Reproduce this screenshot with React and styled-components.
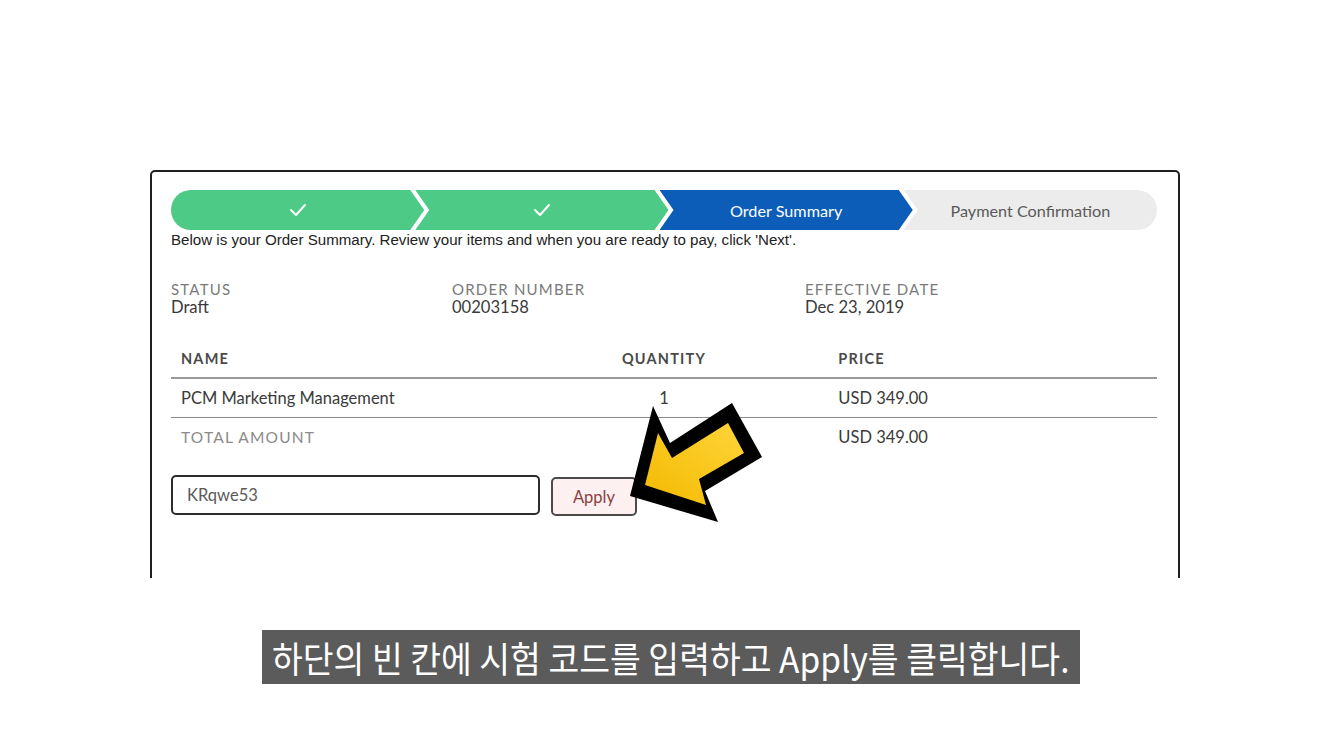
import React from "react";
import styled, { createGlobalStyle } from "styled-components";

const GlobalStyle = createGlobalStyle`
  html, body {
    margin: 0;
    padding: 0;
    background: #ffffff;
  }
  * {
    box-sizing: border-box;
  }
`;

const Page = styled.div`
  width: 1321px;
  height: 741px;
  overflow: hidden;
  background: #ffffff;
  display: flex;
  flex-direction: column;
  padding-top: 170px;
`;

const Viewport = styled.div`
  height: 408px;
  overflow: hidden;
  padding-left: 150px;
`;

const Card = styled.div`
  position: relative;
  width: 1030px;
  height: 520px;
  border: 2px solid #1f1f1f;
  border-radius: 5px;
  background: #ffffff;
  padding: 18px 21px 0 19px;
  font-family: Lato, "Open Sans", sans-serif;
`;

const Steps = styled.div`
  display: flex;
  height: 40px;
`;

const Step = styled.div`
  flex: 1;
  display: flex;
  align-items: center;
  justify-content: center;
  margin-left: ${(p) => (p.$first ? "0" : "-9px")};
  background: ${(p) => p.$bg};
  color: ${(p) => p.$color};
  font-size: 16.2px;
  border-radius: ${(p) =>
    p.$first ? "20px 0 0 20px" : p.$last ? "0 20px 20px 0" : "0"};
  clip-path: ${(p) =>
    p.$first
      ? "polygon(0 0, calc(100% - 14px) 0, 100% 50%, calc(100% - 14px) 100%, 0 100%)"
      : p.$last
      ? "polygon(0 0, 100% 0, 100% 100%, 0 100%, 14px 50%)"
      : "polygon(0 0, calc(100% - 14px) 0, 100% 50%, calc(100% - 14px) 100%, 0 100%, 14px 50%)"};
`;

const Intro = styled.div`
  font-family: "Liberation Sans", Arial, sans-serif;
  font-size: 15.1px;
  color: #222;
  line-height: 17px;
  margin-top: 1px;
`;

const InfoGrid = styled.div`
  display: grid;
  grid-template-columns: 281px 353px 1fr;
  margin-top: 32px;
`;

const InfoLabel = styled.div`
  font-size: 15px;
  letter-spacing: 1.2px;
  color: #7a7a7a;
  text-transform: uppercase;
  line-height: 18px;
`;

const InfoValue = styled.div`
  font-size: 16.6px;
  color: #3a3a3a;
  line-height: 19px;
`;

const Table = styled.div`
  margin-top: 22px;
`;

const Row = styled.div`
  display: grid;
  grid-template-columns: 1fr 1fr 1fr;
  align-items: center;
  height: ${(p) => p.$h || "39px"};
  border-bottom: ${(p) => p.$line || "none"};
`;

const Cell = styled.div`
  padding: 0 10px;
  text-align: ${(p) => p.$align || "left"};
  font-size: ${(p) => (p.$head ? "14.5px" : p.$muted ? "15.5px" : "16.5px")};
  font-weight: ${(p) => (p.$head ? 700 : 400)};
  letter-spacing: ${(p) => (p.$head || p.$muted ? "1.2px" : "0")};
  color: ${(p) => (p.$head ? "#4a4a4a" : p.$muted ? "#8a8a8a" : "#3a3a3a")};
`;

const CouponRow = styled.div`
  display: flex;
  align-items: center;
  gap: 11px;
  margin-top: 18px;
`;

const CodeInput = styled.div`
  width: 369px;
  height: 40px;
  border: 2px solid #2c2c2c;
  border-radius: 5px;
  display: flex;
  align-items: center;
  padding-left: 14px;
  font-size: 16.5px;
  color: #5a5a5a;
`;

const ApplyButton = styled.button`
  width: 86px;
  height: 39px;
  margin-top: 3px;
  border: 2px solid #4a4a4a;
  border-radius: 5px;
  background: #fcf0f0;
  color: #8a3f3f;
  font-family: Lato, "Open Sans", sans-serif;
  font-size: 16.5px;
  cursor: pointer;
`;

const Pointer = styled.svg`
  position: absolute;
  left: 468px;
  top: 223px;
  width: 150px;
  height: 132px;
  overflow: visible;
`;

const CaptionRow = styled.div`
  display: flex;
  padding-left: 262px;
  margin-top: 52px;
`;

const Caption = styled.div`
  width: 818px;
  height: 54px;
  background: #5b5b5b;
  display: flex;
  align-items: center;
  justify-content: center;
  overflow: hidden;
`;

const CaptionText = styled.span`
  display: inline-block;
  white-space: nowrap;
  font-family: "Noto Sans CJK KR", "Noto Sans", sans-serif;
  font-size: 36px;
  line-height: 54px;
  color: #ffffff;
  transform: scaleX(0.93);
`;

const Check = () => (
  <svg width="18" height="14" viewBox="0 0 18 14">
    <polyline
      points="2,7 7,12 16,2"
      fill="none"
      stroke="#ffffff"
      strokeWidth="2"
      strokeLinecap="round"
      strokeLinejoin="round"
    />
  </svg>
);

const steps = [
  { key: "a", bg: "#4dca86", color: "#fff", content: <Check /> },
  { key: "b", bg: "#4dca86", color: "#fff", content: <Check /> },
  { key: "c", bg: "#0b5db8", color: "#fff", content: "Order Summary" },
  { key: "d", bg: "#ececec", color: "#5a5a5a", content: "Payment Confirmation" },
];

const info = [
  { label: "Status", value: "Draft" },
  { label: "Order Number", value: "00203158" },
  { label: "Effective Date", value: "Dec 23, 2019" },
];

export default function App() {
  return (
    <>
      <GlobalStyle />
      <Page>
        <Viewport>
          <Card>
            <Steps>
              {steps.map((s, i) => (
                <Step
                  key={s.key}
                  $bg={s.bg}
                  $color={s.color}
                  $first={i === 0}
                  $last={i === steps.length - 1}
                >
                  {s.content}
                </Step>
              ))}
            </Steps>
            <Intro>
              Below is your Order Summary. Review your items and when you are
              ready to pay, click 'Next'.
            </Intro>

            <InfoGrid>
              {info.map((f) => (
                <div key={f.label}>
                  <InfoLabel>{f.label}</InfoLabel>
                  <InfoValue>{f.value}</InfoValue>
                </div>
              ))}
            </InfoGrid>

            <Table>
              <Row $h="40px" $line="2px solid #9a9a9a">
                <Cell $head>NAME</Cell>
                <Cell $head $align="center">QUANTITY</Cell>
                <Cell $head>PRICE</Cell>
              </Row>
              <Row $line="1px solid #8a8a8a">
                <Cell>PCM Marketing Management</Cell>
                <Cell $align="center">1</Cell>
                <Cell>USD 349.00</Cell>
              </Row>
              <Row $h="38px">
                <Cell $muted>TOTAL AMOUNT</Cell>
                <Cell />
                <Cell>USD 349.00</Cell>
              </Row>
            </Table>

            <CouponRow>
              <CodeInput>KRqwe53</CodeInput>
              <ApplyButton>Apply</ApplyButton>
            </CouponRow>

            <Pointer viewBox="0 0 150 132">
              <defs>
                <linearGradient id="arrowFill" x1="0" y1="1" x2="1" y2="0">
                  <stop offset="0" stopColor="#f3b900" />
                  <stop offset="1" stopColor="#ffd53a" />
                </linearGradient>
              </defs>
              <polygon
                points="10,101 33,11 50,48 112,8 142,62 85,96 98,127"
                fill="#000"
              />
              <polygon
                points="25,90 38,38 52,63 108,28 124,58 79,84 86,110"
                fill="url(#arrowFill)"
              />
            </Pointer>
          </Card>
        </Viewport>

        <CaptionRow>
          <Caption>
            <CaptionText>하단의 빈 칸에 시험 코드를 입력하고 Apply를 클릭합니다.</CaptionText>
          </Caption>
        </CaptionRow>
      </Page>
    </>
  );
}
